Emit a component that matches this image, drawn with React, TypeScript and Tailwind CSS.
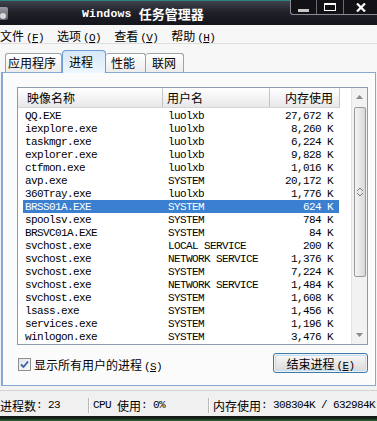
import React from "react";

type R = { n: string; u: string; m: string; sel?: boolean };
const rows: R[] = [
  { n: "QQ.EXE", u: "luolxb", m: "27,672 K" },
  { n: "iexplore.exe", u: "luolxb", m: "8,260 K" },
  { n: "taskmgr.exe", u: "luolxb", m: "6,224 K" },
  { n: "explorer.exe", u: "luolxb", m: "9,828 K" },
  { n: "ctfmon.exe", u: "luolxb", m: "1,016 K" },
  { n: "avp.exe", u: "SYSTEM", m: "20,172 K" },
  { n: "360Tray.exe", u: "luolxb", m: "1,776 K" },
  { n: "BRSS01A.EXE", u: "SYSTEM", m: "624 K", sel: true },
  { n: "spoolsv.exe", u: "SYSTEM", m: "784 K" },
  { n: "BRSVC01A.EXE", u: "SYSTEM", m: "84 K" },
  { n: "svchost.exe", u: "LOCAL SERVICE", m: "200 K" },
  { n: "svchost.exe", u: "NETWORK SERVICE", m: "1,376 K" },
  { n: "svchost.exe", u: "SYSTEM", m: "7,224 K" },
  { n: "svchost.exe", u: "NETWORK SERVICE", m: "1,484 K" },
  { n: "svchost.exe", u: "SYSTEM", m: "1,608 K" },
  { n: "lsass.exe", u: "SYSTEM", m: "1,456 K" },
  { n: "services.exe", u: "SYSTEM", m: "1,196 K" },
  { n: "winlogon.exe", u: "SYSTEM", m: "3,476 K" },
];

function M({ children, className = "" }: { children: React.ReactNode; className?: string }) {
  return (
    <span className={`font-['Liberation_Mono',monospace] text-[11px] tracking-[-0.6px] ${className}`}>{children}</span>
  );
}

function C({ children, className = "" }: { children: React.ReactNode; className?: string }) {
  return <span className={`font-['Noto_Sans_CJK_SC',sans-serif] text-[12px] ${className}`}>{children}</span>;
}

function Acc({ cjk, k }: { cjk: string; k: string }) {
  return (
    <span className="whitespace-nowrap">
      <C>{cjk}</C>
      <M className="ml-[2px]">
        (<span className="underline underline-offset-1">{k}</span>)
      </M>
    </span>
  );
}

export default function App() {
  return (
    <div className="w-[377px] h-[421px] overflow-hidden bg-[#f3f3f3] flex flex-col text-black">
      {/* Title bar */}
      <div className="h-[25px] shrink-0 flex items-start bg-gradient-to-b from-[#3f434c] via-[#1e1f27] to-[#15161c] border-t border-[#2b8484]">
        <div className="mt-[6px] w-[8px] h-[13px] rounded-r-[2px] bg-gradient-to-b from-[#9a9aa4] to-[#5d5d66] flex items-end">
          <div className="w-[6px] h-[6px] rounded-full bg-[#d8d8d8] mb-[1px]" />
        </div>
        <div className="ml-[74px] mt-[3px] flex items-center text-white font-bold">
          <span className="font-['Liberation_Mono',monospace] text-[11.5px] tracking-[0.2px]">Windows</span>
          <span className="ml-[7px] font-['Noto_Sans_CJK_SC',sans-serif] text-[13px]">任务管理器</span>
        </div>
        <div className="ml-auto -mt-[1px] h-[15px] flex border-l border-b border-[#8c8c94] rounded-bl-[3px] bg-[#111116]">
          <div className="w-[26px] flex items-center justify-center border-r border-[#6a6a72]">
            <div className="w-[11px] h-[3px] mt-[6px] bg-[#c8c8c8]" />
          </div>
          <div className="w-[27px] flex items-center justify-center border-r border-[#6a6a72]">
            <div className="w-[12px] h-[8px] border border-white border-t-[2px]" />
          </div>
          <div className="w-[33px] flex items-center justify-center">
            <svg width="10" height="9" viewBox="0 0 10 9">
              <path d="M1 0.5 L9 8.5 M9 0.5 L1 8.5" stroke="#fff" strokeWidth="2.2" />
            </svg>
          </div>
        </div>
      </div>

      {/* Menu bar */}
      <div className="h-[19px] shrink-0 flex items-center gap-[13px] pt-[1px] bg-[#f7f7f7] border-b border-[#dedede]">
        <Acc cjk="文件" k="F" />
        <Acc cjk="选项" k="O" />
        <Acc cjk="查看" k="V" />
        <Acc cjk="帮助" k="H" />
      </div>

      {/* Tabs */}
      <div className="h-[28px] shrink-0 flex items-end pl-[5px] bg-[#f7f7f7]">
        <div className="w-[57px] h-[19px] border border-b-0 border-[#9aa3a8] rounded-t-[3px] bg-gradient-to-b from-white to-[#ececec] flex items-center pl-[2px]">
          <C>应用程序</C>
        </div>
        <div className="relative z-10 -mb-[1px] w-[44px] h-[23px] border border-b-0 border-[#6e9bd0] rounded-t-[4px] bg-gradient-to-b from-[#d6e8f9] to-[#eef6fd] flex items-start pt-[2px] pl-[6px]">
          <C>进程</C>
        </div>
        <div className="w-[40px] h-[19px] border border-b-0 border-l-0 border-[#9aa3a8] rounded-t-[3px] bg-gradient-to-b from-white to-[#ececec] flex items-center pl-[5px]">
          <C>性能</C>
        </div>
        <div className="w-[38px] h-[19px] border border-b-0 border-l-0 border-[#9aa3a8] rounded-t-[3px] bg-gradient-to-b from-white to-[#ececec] flex items-center pl-[6px]">
          <C>联网</C>
        </div>
      </div>

      {/* Panel */}
      <div className="mx-[1px] h-[314px] shrink-0 border border-l-[2px] border-[#86a9d4] bg-[#fbfbfb] flex flex-col">
        {/* List */}
        <div className="ml-[14px] mr-[7px] mt-[14px] h-[258px] border border-[#8c9cae] bg-white flex">
          <div className="w-[333px] flex flex-col">
            <div className="h-[20px] flex bg-gradient-to-b from-white to-[#e8e8ea] border-b border-[#d5d5d5] w-[322px] border-r border-r-[#c4c4c4]">
              <div className="w-[145px] border-r border-[#c4c4c4] flex items-center pl-[9px]">
                <C>映像名称</C>
              </div>
              <div className="w-[107px] border-r border-[#c4c4c4] flex items-center pl-[4px]">
                <C>用户名</C>
              </div>
              <div className="flex-1 flex items-center justify-end pr-[6px]">
                <C>内存使用</C>
              </div>
            </div>
            <div className="pt-[1px] flex flex-col">
              {rows.map((r, i) => (
                <div
                  key={i}
                  className={`ml-[5px] w-[316px] h-[13px] leading-[11px] pb-[2px] flex items-center whitespace-nowrap ${
                    r.sel ? "bg-[#3a7fd0] text-white" : ""
                  }`}
                >
                  <div className="w-[140px] pl-[2px]">
                    <M>{r.n}</M>
                  </div>
                  <div className="w-[107px] pl-[5px]">
                    <M>{r.u}</M>
                  </div>
                  <div className="flex-1 text-right pr-[6px]">
                    <M>{r.m}</M>
                  </div>
                </div>
              ))}
            </div>
          </div>
          {/* Scrollbar */}
          <div className="w-[16px] bg-[#f2f2f2] border-l border-[#e4e4e4] flex flex-col items-center">
            <div className="h-[18px] flex items-center justify-center">
              <svg width="7" height="4" viewBox="0 0 7 4">
                <path d="M0 4 L3.5 0 L7 4 Z" fill="#8a8a8a" />
              </svg>
            </div>
            <div className="mt-[1px] w-[12px] h-[170px] rounded-[2px] border border-[#9a9a9a] bg-gradient-to-r from-[#f4f4f4] to-[#d9d9d9] flex items-center justify-center">
              <svg width="6" height="8" viewBox="0 0 6 8">
                <path d="M0 3 L3 0 L6 3 M0 5 L3 8 L6 5" stroke="#7a7a7a" fill="none" strokeWidth="1" />
              </svg>
            </div>
            <div className="flex-1" />
            <div className="h-[18px] flex items-center justify-center">
              <svg width="7" height="4" viewBox="0 0 7 4">
                <path d="M0 0 L3.5 4 L7 0 Z" fill="#8a8a8a" />
              </svg>
            </div>
          </div>
        </div>

        {/* Bottom controls */}
        <div className="ml-[15px] mr-[7px] mt-[8px] flex items-start justify-between">
          <div className="flex items-center mt-[-1px]">
            <div className="w-[13px] h-[13px] border border-[#8e8f8f] bg-gradient-to-br from-[#dfe7f0] to-[#f8f8f8] flex items-center justify-center">
              <svg width="9" height="9" viewBox="0 0 9 9">
                <path d="M1 4.5 L3.5 7 L8 1.5" stroke="#3e5ea8" strokeWidth="1.8" fill="none" />
              </svg>
            </div>
            <span className="ml-[3px]">
              <Acc cjk="显示所有用户的进程" k="S" />
            </span>
          </div>
          <div className="w-[95px] h-[20px] rounded-[3px] border border-[#3d7bad] p-[1px] bg-[#f0f0f0]">
            <div className="w-full h-full rounded-[2px] border border-[#bfe0f4] bg-gradient-to-b from-[#f6f6f6] to-[#dcdcdc] flex items-center justify-center">
              <Acc cjk="结束进程" k="E" />
            </div>
          </div>
        </div>
      </div>

      {/* Status bar */}
      <div className="mt-[4px] h-[26px] shrink-0 border-t border-[#d4d4d4] bg-[#f0f0f0] flex items-center pt-[4px] whitespace-nowrap">
        <div className="w-[88px] flex items-center">
          <C>进程数</C>
          <M>: 23</M>
        </div>
        <div className="w-[2px] h-[15px] border-l border-[#b8b8b8] border-r border-r-white" />
        <div className="w-[118px] pl-[3px] flex items-center">
          <M>CPU</M>
          <C className="ml-[6px]">使用</C>
          <M>: 0%</M>
        </div>
        <div className="w-[2px] h-[15px] border-l border-[#b8b8b8] border-r border-r-white" />
        <div className="pl-[3px] flex items-center">
          <C>内存使用</C>
          <M>: 308304K / 632984K</M>
        </div>
      </div>
      <div className="flex-1 bg-gradient-to-b from-[#121614] via-[#16261c] to-[#2f6a3c]" />
    </div>
  );
}
